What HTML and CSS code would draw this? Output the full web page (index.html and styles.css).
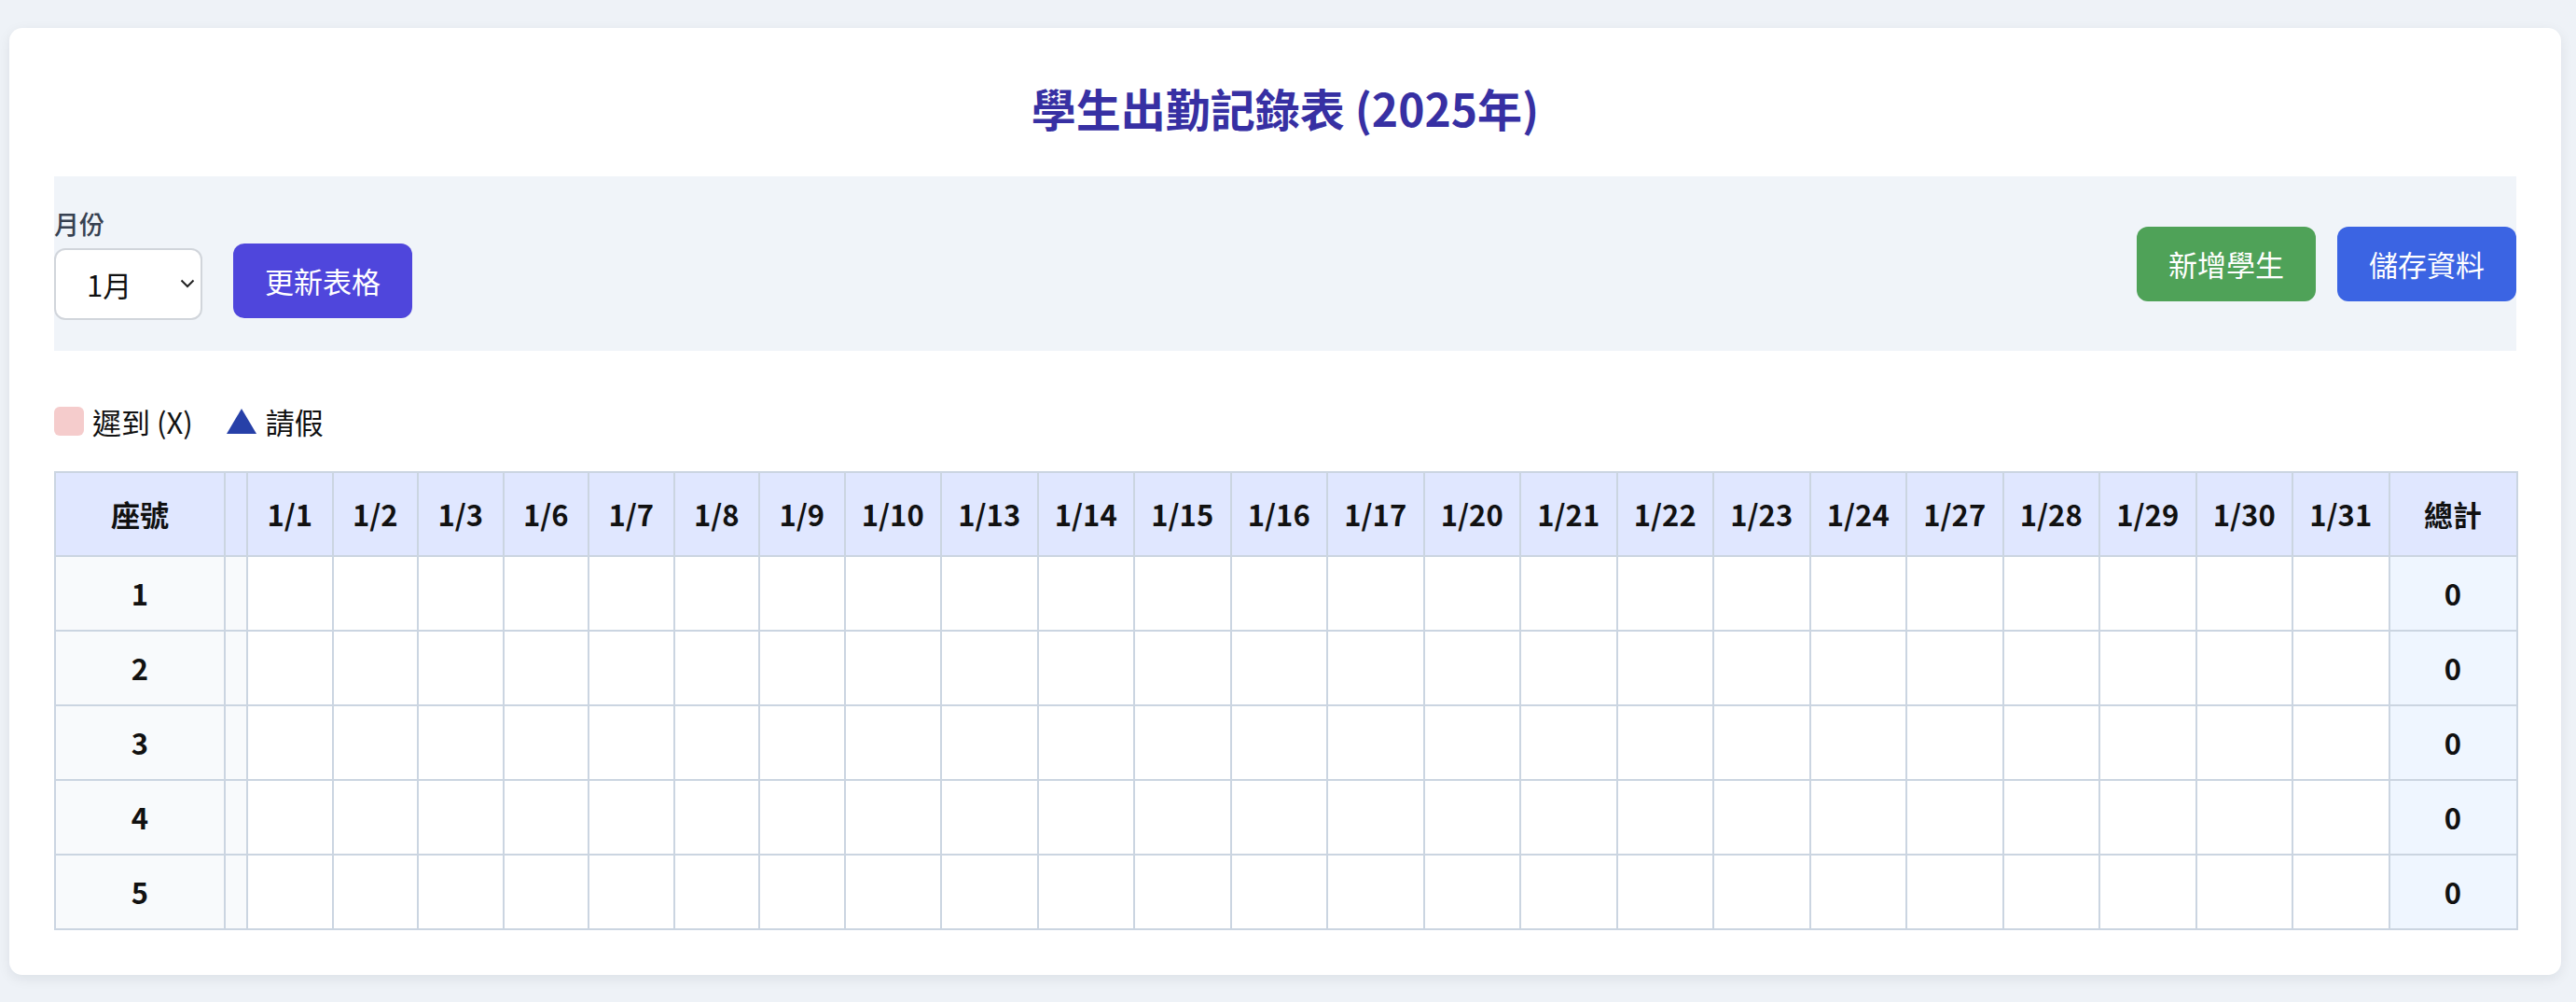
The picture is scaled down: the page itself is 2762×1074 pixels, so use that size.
FILE: index.html
```html
<!DOCTYPE html>
<html lang="zh-Hant">
<head>
  <meta charset="UTF-8">
  <meta name="viewport" content="width=device-width, initial-scale=1.0">
  <title>學生出勤記錄表</title>
  <link rel="stylesheet" href="styles.css">
</head>
<body>
  <div class="container">
    <h1 class="title">學生出勤記錄表 (2025年)</h1>

    <!-- Toolbar -->
    <div class="toolbar">
      <div class="toolbar-left">
        <div class="field">
          <label for="monthSelect">月份</label>
          <div class="select-wrap">
            <select id="monthSelect">
              <option value="1">1月</option>
              <option value="2">2月</option>
              <option value="3">3月</option>
              <option value="4">4月</option>
              <option value="5">5月</option>
              <option value="6">6月</option>
              <option value="7">7月</option>
              <option value="8">8月</option>
              <option value="9">9月</option>
              <option value="10">10月</option>
              <option value="11">11月</option>
              <option value="12">12月</option>
            </select>
            <svg class="chevron" width="16" height="10" viewBox="0 0 16 10">
              <path d="M1.5 1.5 L8 8 L14.5 1.5" fill="none" stroke="#222" stroke-width="2"/>
            </svg>
          </div>
        </div>
        <button class="btn btn-indigo" id="updateButton">更新表格</button>
      </div>
      <div class="toolbar-right">
        <button class="btn btn-green" id="addButton">新增學生</button>
        <button class="btn btn-blue" id="saveButton">儲存資料</button>
      </div>
    </div>

    <!-- Legend -->
    <div class="legend">
      <span class="legend-late"></span>
      <span class="legend-text">遲到 (X)</span>
      <svg class="legend-leave" width="32" height="27" viewBox="0 0 32 27">
        <polygon points="16,0 32,27 0,27" fill="#2740a8"/>
      </svg>
      <span class="legend-text">請假</span>
    </div>

    <!-- Attendance table -->
    <table class="attendance" id="attendance">
      <colgroup id="cols"></colgroup>
      <thead><tr id="headRow"></tr></thead>
      <tbody id="body"></tbody>
    </table>
  </div>

  <script>
    const year = 2025;
    let month = 1;
    let students = [1, 2, 3, 4, 5];

    // Weekdays of the chosen month
    function getSchoolDays(y, m) {
      const days = [];
      const last = new Date(y, m, 0).getDate();
      for (let d = 1; d <= last; d++) {
        const w = new Date(y, m - 1, d).getDay();
        if (w !== 0 && w !== 6) days.push(d);
      }
      return days;
    }

    function buildTable() {
      const days = getSchoolDays(year, month);
      const cols = document.getElementById("cols");
      const headRow = document.getElementById("headRow");
      const body = document.getElementById("body");

      let colHtml = '<col class="col-seat"><col class="col-name">';
      let headHtml = '<th>座號</th><th></th>';
      days.forEach(d => {
        colHtml += d < 10 ? '<col class="col-day">' : '<col class="col-day-wide">';
        headHtml += `<th>${month}/${d}</th>`;
      });
      colHtml += '<col class="col-total">';
      headHtml += '<th>總計</th>';
      cols.innerHTML = colHtml;
      headRow.innerHTML = headHtml;

      body.innerHTML = "";
      students.forEach(no => {
        let row = `<td class="seat">${no}</td><td class="name"></td>`;
        days.forEach(() => { row += '<td class="day"></td>'; });
        row += '<td class="total">0</td>';
        const tr = document.createElement("tr");
        tr.innerHTML = row;
        body.appendChild(tr);
      });
    }

    document.getElementById("updateButton").addEventListener("click", () => {
      month = parseInt(document.getElementById("monthSelect").value, 10);
      buildTable();
    });

    document.getElementById("addButton").addEventListener("click", () => {
      students.push(students.length + 1);
      buildTable();
    });

    buildTable();
  </script>
</body>
</html>
```

FILE: styles.css
```css
* {
  margin: 0;
  padding: 0;
  box-sizing: border-box;
}

body {
  font-family: "Noto Sans CJK TC", "Noto Sans", sans-serif;
  background-color: #eef2f7;
  padding: 30px 16px 30px 10px;
  color: #111;
}

.container {
  background-color: #fff;
  border-radius: 14px;
  padding: 48px;
  box-shadow: 0 4px 14px rgba(15, 23, 42, 0.08);
}

.title {
  font-size: 48px;
  line-height: 74px;
  font-weight: 700;
  color: #3730a3;
  text-align: center;
  margin-bottom: 37px;
}

/* Toolbar */
.toolbar {
  display: flex;
  justify-content: space-between;
  align-items: center;
  background-color: #f0f4f9;
  padding: 33px 0;
}

.toolbar-left {
  display: flex;
  align-items: flex-end;
  gap: 33px;
}

.field {
  display: flex;
  flex-direction: column;
  gap: 9px;
}

.field label {
  font-size: 27px;
  line-height: 35px;
  font-weight: 500;
  color: #374151;
}

.select-wrap {
  position: relative;
  width: 159px;
  height: 77px;
}

.select-wrap select {
  appearance: none;
  width: 100%;
  height: 100%;
  font-family: inherit;
  font-size: 31px;
  color: #111;
  background-color: #fff;
  border: 2px solid #d1d5db;
  border-radius: 12px;
  padding: 0 0 0 33px;
}

.chevron {
  position: absolute;
  right: 8px;
  top: 33px;
  pointer-events: none;
}

.toolbar-right {
  display: flex;
  gap: 23px;
}

.btn {
  font-family: inherit;
  font-size: 31px;
  line-height: 46px;
  padding: 17px 34px;
  color: #fff;
  border: none;
  border-radius: 12px;
  cursor: pointer;
}

.btn-indigo {
  background-color: #4f46dc;
  margin-bottom: 2px;
}

.btn-green {
  background-color: #4fa258;
}

.btn-blue {
  background-color: #3b64e3;
}

/* Legend */
.legend {
  display: flex;
  align-items: center;
  font-size: 31px;
  line-height: 47px;
  margin: 52px 0 30px;
}

.legend-late {
  width: 32px;
  height: 31px;
  border-radius: 6px;
  background-color: #f5cccc;
  margin-right: 9px;
}

.legend-text {
  margin-right: 36px;
}

.legend-leave {
  margin-right: 10px;
}

/* Table */
.attendance {
  width: 100%;
  table-layout: fixed;
  border-collapse: collapse;
  font-size: 31px;
  line-height: 46px;
}

.col-seat { width: 182px; }
.col-name { width: 24px; }
.col-day { width: 91.5px; }
.col-day-wide { width: 103.5px; }
.col-total { width: 137px; }

.attendance th,
.attendance td {
  border: 2px solid #cbd5e1;
  text-align: center;
  font-weight: 700;
  padding: 16px 12px;
}

.attendance th {
  background-color: #e0e7ff;
  padding: 21px 0;
}

.attendance td.seat,
.attendance td.name {
  background-color: #f8fafc;
}

.attendance td.total {
  background-color: #eff6ff;
}
```
